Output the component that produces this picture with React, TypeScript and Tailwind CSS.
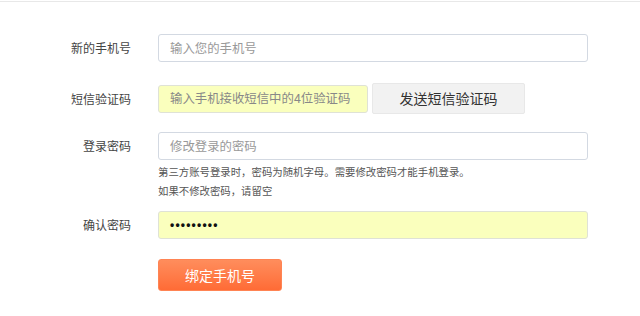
import React from "react";

const font = { fontFamily: '"Noto Sans CJK SC", "Noto Sans", sans-serif' };

function Label({ children }: { children: React.ReactNode }) {
  return (
    <div className="w-[131px] shrink-0 text-right text-[12px] leading-none text-[#444]">
      {children}
    </div>
  );
}

export default function App() {
  return (
    <div className="w-[640px] h-[316px] bg-white overflow-hidden" style={font}>
      <div className="h-px mt-px bg-[#e8e8e8]" />
      <div className="flex flex-col">
        <div className="flex items-center gap-[27px] mt-[32px]">
          <Label>新的手机号</Label>
          <div className="w-[430px] h-[28px] rounded-[3px] border border-[#d3d9e2] bg-white flex items-center px-[11px] text-[12.4px] text-[#999]">
            输入您的手机号
          </div>
        </div>

        <div className="flex items-center mt-[21px]">
          <Label>短信验证码</Label>
          <div className="ml-[27px] w-[210px] h-[28px] rounded-[3px] border border-[#dfe2d6] bg-[#faffbd] flex items-center px-[11px] text-[12.4px] text-[#888]">
            输入手机接收短信中的4位验证码
          </div>
          <div className="ml-[4px] w-[153px] h-[31px] rounded-[2px] border border-[#e8e8e8] bg-[#f2f2f2] flex items-center justify-center text-[14px] text-[#333]">
            发送短信验证码
          </div>
        </div>

        <div className="flex items-center gap-[27px] mt-[18px]">
          <Label>登录密码</Label>
          <div className="w-[430px] h-[28px] rounded-[3px] border border-[#d3d9e2] bg-white flex items-center px-[11px] text-[12.4px] text-[#999]">
            修改登录的密码
          </div>
        </div>

        <div className="ml-[158px] mt-[2px] text-[10.4px] leading-[19px] text-[#555]">
          <div>第三方账号登录时，密码为随机字母。需要修改密码才能手机登录。</div>
          <div>如果不修改密码，请留空</div>
        </div>

        <div className="flex items-center gap-[27px] mt-[11px]">
          <Label>确认密码</Label>
          <div className="w-[430px] h-[28px] rounded-[3px] border border-[#dfe2d6] bg-[#faffbd] flex items-center px-[11px] text-[12px] text-[#111]">
            <span className="tracking-[1.2px] font-bold" style={{ fontFamily: '"Liberation Sans", sans-serif' }}>
              •••••••••
            </span>
          </div>
        </div>

        <div className="ml-[158px] mt-[20px] w-[124px] h-[32px] rounded-[3px] border border-[#ff8454] bg-gradient-to-b from-[#ff8d5c] to-[#ff6b35] flex items-center justify-center text-[14px] text-white">
          绑定手机号
        </div>
      </div>
    </div>
  );
}
